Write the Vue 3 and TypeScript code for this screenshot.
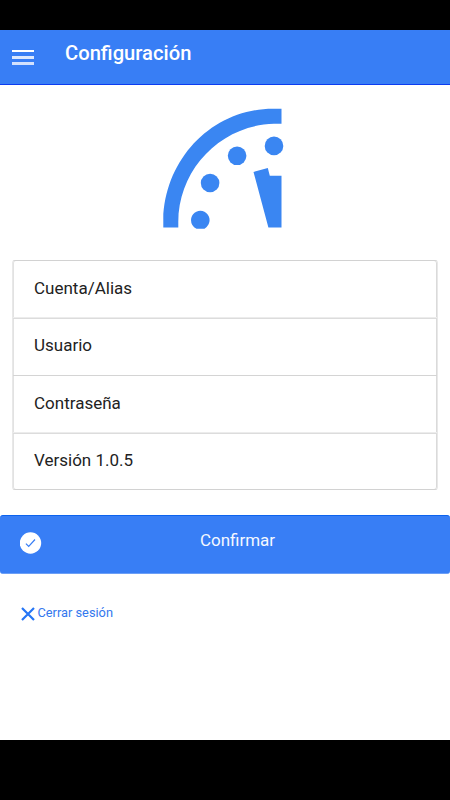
<script setup lang="ts">
const rows: string[] = ['Cuenta/Alias', 'Usuario', 'Contraseña', 'Versión 1.0.5']
</script>

<template>
  <div class="screen">
    <header class="bar">
      <svg class="menu" width="22" height="16" viewBox="0 0 22 16" aria-hidden="true">
        <rect width="22" height="2" fill="#fff" />
        <rect y="6" width="22" height="3" fill="#dce8fe" />
        <rect y="12" width="22" height="3" fill="#d3e1fd" />
      </svg>
      <h1 class="title">Configuración</h1>
    </header>
    <main class="content">
      <svg class="logo" width="122" height="122" viewBox="162 107 122 122" fill="#3a86f2" aria-hidden="true">
        <path d="M163.3 227.6V219C165 158 213 108.7 273 108.7H281.5V123.8H274C221 125 178.3 169 178.3 222V227.6Z" />
        <path d="M191 220a9.3 9.3 0 1 1 17.6 4.3Q207.2 227 204.5 228.7H196.5Q191 226 191 220Z" />
        <circle cx="210.1" cy="183" r="9.3" />
        <circle cx="237.1" cy="155.8" r="9.3" />
        <circle cx="274" cy="145.9" r="9.3" />
        <path d="M253.5 172L267.8 168L269.8 175.7H281.5V227.6H268.4Z" />
      </svg>
      <ul class="list">
        <li v-for="row in rows" :key="row" class="row">{{ row }}</li>
      </ul>
      <button class="confirm" type="button">
        <svg class="check" width="22" height="22" viewBox="0 0 22 22" aria-hidden="true">
          <circle cx="10.5" cy="11" r="10.7" fill="#fff" />
          <path d="M5.9 11.6L8.7 14.4L15 7.5" fill="none" stroke="#387ef5" stroke-width="1.2" />
        </svg>
        <span class="confirm-label">Confirmar</span>
      </button>
      <a class="logout">
        <svg class="close" width="14" height="14" viewBox="0 0 14 14" aria-hidden="true">
          <path d="M1 1L13 13M13 1L1 13" stroke="#2575f5" stroke-width="2.2" />
        </svg>
        <span>Cerrar sesión</span>
      </a>
    </main>
  </div>
</template>

<style>
body {
  margin: 0;
  background: #000;
}
</style>

<style scoped>
.screen {
  box-sizing: border-box;
  width: 450px;
  height: 800px;
  padding: 30px 0 60px;
  display: flex;
  flex-direction: column;
  background: #000;
  font-family: Roboto, sans-serif;
}
.bar {
  box-sizing: border-box;
  height: 55px;
  flex: none;
  display: flex;
  align-items: flex-start;
  padding-left: 12px;
  background: #387ef5;
  border-bottom: 1px solid #0c3cf0;
}
.menu {
  margin-top: 20px;
}
.title {
  margin: 11px 0 0 31px;
  font-size: 20.2px;
  line-height: 24px;
  font-weight: 500;
  color: #fff;
}
.content {
  flex: 1;
  background: #fff;
  display: flex;
  flex-direction: column;
}
.logo {
  margin: 22px 0 0 162px;
}
.list {
  list-style: none;
  margin: 31px 12px 0;
  padding: 0;
  border: 1px solid #d2d2d2;
  border-left-color: #e8e8e8;
  border-right-color: #e8e8e8;
  box-shadow: inset 1px 0 #e2e2e2, inset -1px 0 #dadada;
  border-radius: 3px;
}
.row {
  box-sizing: border-box;
  height: 57.5px;
  padding: 15.5px 21px 0;
  font-size: 17px;
  line-height: 22px;
  color: #222;
  border-bottom: 1px solid #d4d4d4;
}
.row:nth-child(odd) {
  border-bottom-color: #dcdcdc;
  box-shadow: inset 0 -1px #ececec;
}
.row:last-child {
  height: 55.5px;
  border-bottom: 0;
}
.confirm {
  box-sizing: border-box;
  height: 59px;
  margin: 25px 0 0;
  padding: 0 20px;
  border: 0;
  border-top: 1px solid #0c63ee;
  border-bottom: 1px solid #6c9ff6;
  border-radius: 3px;
  background: #387ef5;
  color: #f4f8ff;
  font: 17px/22px Roboto, sans-serif;
  display: grid;
  align-items: start;
}
.check {
  grid-area: 1 / 1;
  margin-top: 16px;
}
.confirm-label {
  grid-area: 1 / 1;
  margin: 13px 0 0 25px;
}
.logout {
  display: flex;
  align-items: flex-start;
  gap: 3px;
  margin: 31px 0 0 20.5px;
  font-size: 12.8px;
  line-height: 16px;
  color: #3378ee;
}
.close {
  margin-top: 2px;
}
</style>
